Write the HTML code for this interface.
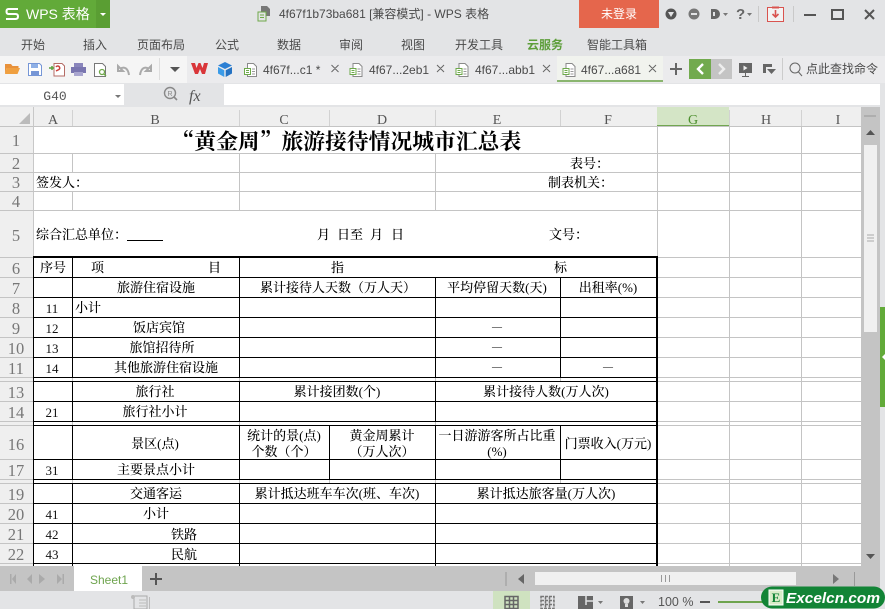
<!DOCTYPE html>
<html><head><meta charset="utf-8"><style>
html,body{margin:0;padding:0;width:885px;height:609px;overflow:hidden;background:#e3e4e6}
svg{display:block}
.t{font:13px "Liberation Serif","Noto Serif CJK SC",serif;fill:#000;font-weight:500}
.c{text-anchor:middle}
.n{font:13px "Liberation Serif",serif;fill:#111;text-anchor:middle}
.d{font:10px "Liberation Serif",serif;fill:#000;text-anchor:middle}
.ti{font:700 21.800px "Noto Serif CJK SC",serif;fill:#000}
.rh{font:16.500px "Liberation Serif",serif;fill:#777;text-anchor:middle}
.ch{font:14px "Liberation Serif",serif;fill:#555;text-anchor:middle}
.u{font:12px "Liberation Sans","Noto Sans CJK SC",sans-serif;fill:#4a4a4a}
.m{text-anchor:middle}
</style></head><body>
<svg width="885" height="609" viewBox="0 0 885 609" xmlns="http://www.w3.org/2000/svg">
<rect width="885" height="609" fill="#e3e4e6"/>

<!-- title bar -->
<rect width="110" height="28" fill="#62aa39"/>
<rect x="96" width="14" height="28" fill="#5a9e33"/>
<path d="M18 9H8.500Q6.500 9 6.500 11.500T8.500 14H15.500Q18 14 18 16.500T15.500 19H6" fill="none" stroke="#fff" stroke-width="2"/>
<text x="26" y="19" font-family="Liberation Sans,Noto Sans CJK SC,sans-serif" font-size="14" fill="#fff">WPS 表格</text>
<path d="M100 13h6l-3 3z" fill="#fff"/>
<path d="M261 6h6l3 3v7h-9z" fill="#777"/><rect x="258" y="12" width="8" height="9" fill="#e3e4e6" stroke="#6fa94a"/><path d="M260 15h4M260 17.500h4" stroke="#6fa94a"/>
<text class="u" x="279" y="18" fill="#555">4f67f1b73ba681 [兼容模式] - WPS 表格</text>
<rect x="579" width="80" height="28" fill="#e5664c"/>
<text x="619" y="18" class="m" font-family="Noto Sans CJK SC,sans-serif" font-size="12" fill="#fff">未登录</text>
<circle cx="671" cy="14" r="5.500" fill="#555"/><path d="M668 12h6l-3 5z" fill="#e3e4e6"/>
<circle cx="694" cy="14" r="5.500" fill="#777"/><rect x="691" y="13" width="6" height="2" fill="#e3e4e6"/>
<path d="M711 9h4a5 5 0 0 1 0 10h-4z" fill="#666"/><path d="M714 12v4" stroke="#e3e4e6" stroke-width="2"/><path d="M723 13h5l-2.500 3z" fill="#777"/>
<text x="736" y="19" font-family="Liberation Sans,sans-serif" font-size="15" font-weight="700" fill="#666">?</text><path d="M747 13h5l-2.500 3z" fill="#777"/>
<path d="M758.500 6v16M793.500 6v16" stroke="#c9c9c9"/>
<rect x="767.500" y="7.500" width="16" height="14" fill="#f3f3f3" stroke="#d9534f"/><path d="M772 7.500h7" stroke="#d9534f" stroke-width="2"/><path d="M775.500 10v6M772.500 14l3 3 3-3" fill="none" stroke="#d9534f" stroke-width="1.600"/>
<rect x="804" y="14" width="12" height="2" fill="#555"/>
<rect x="832" y="10" width="11" height="9" fill="none" stroke="#555" stroke-width="2"/>
<path d="M865 10l9 9M874 10l-9 9" stroke="#555" stroke-width="2"/>

<!-- ribbon -->
<g class="u" font-size="12">
<text class="u" x="21" y="49">开始</text><text class="u" x="83" y="49">插入</text><text class="u" x="137" y="49">页面布局</text><text class="u" x="215" y="49">公式</text><text class="u" x="277" y="49">数据</text><text class="u" x="339" y="49">审阅</text><text class="u" x="401" y="49">视图</text><text class="u" x="455" y="49">开发工具</text>
<text x="527" y="49" font-family="Noto Sans CJK SC,sans-serif" font-size="12" font-weight="700" fill="#5d9e3a">云服务</text>
<text class="u" x="587" y="49">智能工具箱</text></g>

<!-- toolbar -->
<rect y="56" width="187" height="27" fill="#f5f5f5"/>
<rect x="187" y="56" width="698" height="27" fill="#ebebed"/>
<path d="M5 64h6l1.500 2h6v2h-12l-1.500 6z" fill="#e8913a"/><path d="M6.500 68h13.500l-2.500 6h-12.500z" fill="#f0a040"/>
<path d="M28.500 63.500h11l2 2v10h-13z" fill="#fff" stroke="#7696d6"/><rect x="31" y="64" width="7" height="4" fill="#8fb0e6"/><rect x="31" y="71" width="8" height="4" fill="#7696d6"/>
<path d="M54 63.500h8l2.500 2.500v10h-10.500z" fill="#fff" stroke="#b56c66"/><path d="M49 68h5M52 66v4" stroke="#58a03a" stroke-width="1.500"/><path d="M56 71l2-1a2 2 0 1 0-2-3" fill="none" stroke="#c9403a" stroke-width="1.500"/>
<rect x="74" y="63" width="9" height="4" fill="#8a86bc"/><rect x="71" y="67" width="15" height="6" fill="#7a76b0"/><rect x="74" y="72" width="9" height="4" fill="#a9a6cf"/>
<path d="M94.500 63.500h8l3 3v10h-11z" fill="#fff" stroke="#777"/><circle cx="102" cy="72" r="2.500" fill="none" stroke="#6fa94a" stroke-width="1.300"/><path d="M104 74l2 2" stroke="#6fa94a" stroke-width="1.300"/>
<path d="M118 66v5h5zM120 69c4-3 8-1 9 6" fill="none" stroke="#aaa" stroke-width="2"/>
<path d="M151 66v5h-5zM149 69c-4-3-8-1-9 6" fill="none" stroke="#aaa" stroke-width="2"/>
<path d="M159.500 58v22" stroke="#ddd"/>
<path d="M170 67h10l-5 5z" fill="#555"/>
<path d="M191 63l4 11h3l2-5 2 5h3l3-11h-4l-1.500 5-2-5h-2l-2 5-1.500-5z" fill="#d9363a"/>
<path d="M225 62l7 3.500-7 3.500-7-3.500z" fill="#2b7fd4"/><path d="M218 67l6.300 3.300v6.700l-6.300-3.500z" fill="#3a9be8"/><path d="M232 67l-6.300 3.300v6.700l6.300-3.500z" fill="#2472c2"/>
<g id="d1"><path d="M247.500 63.500h6l3 3v10h-9z" fill="#fff" stroke="#8a8a8a"/><rect x="244.500" y="68.500" width="6" height="6" fill="#fff" stroke="#6da94a"/><path d="M246 70.500h3M246 72.500h3" stroke="#6da94a"/><path d="M252 69h3M252 71.500h3M252 74h3" stroke="#999"/></g>
<use href="#d1" x="105.500"/><use href="#d1" x="211.500"/>
<rect x="557" y="56" width="106" height="26" fill="#f1f3ee"/><rect x="557" y="80" width="106" height="2" fill="#8ab56f"/>
<use href="#d1" x="318.500"/>
<text class="u" x="263" y="74" font-size="12.500">4f67f...c1 *</text><text class="u" x="369" y="74">4f67...2eb1</text><text class="u" x="475" y="74">4f67...abb1</text><text class="u" x="581" y="74">4f67...a681</text>
<path d="M331.500 65l7 7M338.500 65l-7 7M437 65l7 7M444 65l-7 7M543 65l7 7M550 65l-7 7M649 65l7 7M656 65l-7 7" stroke="#666"/>
<path d="M676 63v12M670 69h12" stroke="#666" stroke-width="2"/>
<rect x="689" y="59" width="22" height="20" fill="#72aa4e"/><rect x="711" y="59" width="21" height="20" fill="#c4c4c4"/>
<path d="M703 64l-5 5 5 5" fill="none" stroke="#fff" stroke-width="2.400"/><path d="M719 64l5 5-5 5" fill="none" stroke="#eee" stroke-width="2.400"/>
<rect x="739" y="63" width="13" height="10" fill="#666"/><path d="M745.500 73v3M742 76.500h7" fill="none" stroke="#666"/><path d="M743.500 65.500l4 2.500-4 2.500z" fill="#eee"/>
<path d="M763 64h9v3h-6v6h-3z" fill="#666"/><path d="M767 69h9l-4.500 5z" fill="#666"/>
<path d="M782.500 58v22" stroke="#ccc"/>
<circle cx="795" cy="68" r="5" fill="none" stroke="#666"/><path d="M798.500 72l3.500 4" stroke="#666"/>
<text class="u" x="806" y="73">点此查找命令</text>

<!-- formula bar -->
<rect y="84" width="124" height="21" fill="#fff"/>
<text x="55" y="100" class="m" font-family="Liberation Mono,monospace" font-size="13" fill="#555">G40</text>
<path d="M115 95h6l-3 3z" fill="#777"/>
<circle cx="170" cy="93" r="5.500" fill="none" stroke="#888" stroke-width="1.400"/><path d="M174 97l3 3" stroke="#888" stroke-width="1.600"/><text x="170" y="96" class="m" font-family="Liberation Sans,sans-serif" font-size="7" fill="#888">R</text>
<text x="189" y="101" font-family="Liberation Serif,serif" font-style="italic" font-size="16" fill="#555">fx</text>
<rect x="224" y="84" width="656" height="21" fill="#fff"/>

<!-- sheet -->
<rect x="0" y="107" width="861" height="459" fill="#fff"/>
<rect x="0" y="107" width="861" height="19" fill="#efefef"/>
<rect x="0" y="107" width="33" height="459" fill="#efefef"/>
<path d="M30 113v11h-11z" fill="#bbb"/>
<rect x="657" y="107" width="72" height="19" fill="#d4e5c6"/>
<rect x="657" y="125" width="72" height="2" fill="#71a650"/>
<g stroke="#d2d2d2"><path d="M72.500 110v16M239.500 110v16M329.500 110v16M435.500 110v16M560.500 110v16M729.500 110v16M801.500 110v16"/></g>
<path d="M0 126.500H861" stroke="#c4c4c4"/>
<path d="M33.500 107V566" stroke="#c8c8c8"/>
<text class="ch" x="53" y="124">A</text><text class="ch" x="155" y="124">B</text><text class="ch" x="284" y="124">C</text><text class="ch" x="382" y="124">D</text><text class="ch" x="497" y="124">E</text><text class="ch" x="608" y="124">F</text><text class="ch" x="693" y="124" style="fill:#4c8f2e">G</text><text class="ch" x="766" y="124">H</text><text class="ch" x="838" y="124">I</text>
<g><text class="rh" x="16" y="146">1</text><text class="rh" x="16" y="169">2</text><text class="rh" x="16" y="188">3</text><text class="rh" x="16" y="207">4</text><text class="rh" x="16" y="241">5</text><text class="rh" x="16" y="274">6</text><text class="rh" x="16" y="294">7</text><text class="rh" x="16" y="314">8</text><text class="rh" x="16" y="334">9</text><text class="rh" x="16" y="354">10</text><text class="rh" x="16" y="374">11</text><text class="rh" x="16" y="398">13</text><text class="rh" x="16" y="418">14</text><text class="rh" x="16" y="450">16</text><text class="rh" x="16" y="476">17</text><text class="rh" x="16" y="500">19</text><text class="rh" x="16" y="520">20</text><text class="rh" x="16" y="540">21</text><text class="rh" x="16" y="560">22</text></g>

<!-- grid -->
<g stroke="#c4c4c4">
<path d="M0 153.500H861M0 172.500H861M0 191.500H861M0 210.500H861M0 257.500H33M657 257.500H861M657 277.500H861M0 277.500H33M657 297.500H861M0 297.500H33M657 317.500H861M0 317.500H33M657 337.500H861M0 337.500H33M657 357.500H861M0 357.500H33M657 377.500H861M0 377.500H33M657 381.500H861M0 381.500H33M657 401.500H861M0 401.500H33M657 421.500H861M0 421.500H33M657 425.500H861M0 425.500H33M657 459.500H861M0 459.500H33M657 479.500H861M0 479.500H33M657 483.500H861M0 483.500H33M657 503.500H861M0 503.500H33M657 523.500H861M0 523.500H33M657 543.500H861M0 543.500H33M657 563.500H861M0 563.500H33"/>
<path d="M657.500 126V257M729.500 126V566M801.500 126V566M72.500 153V172M72.500 191V210M239.500 153V210M435.500 153V210"/>
<path d="M72.500 377V381M239.500 377V381M435.500 377V381M560.500 377V381M72.500 421V425M239.500 421V425M435.500 421V425M72.500 479V483M239.500 479V483M329.500 479V483M435.500 479V483M560.500 479V483"/>
</g>
<g stroke="#000">
<path d="M33 277.500H657M33 297.500H657M33 317.500H657M33 337.500H657M33 357.500H657M33 377.500H657M33 381.500H657M33 401.500H657M33 421.500H657M33 425.500H657M33 459.500H657M33 479.500H657M33 483.500H657M33 503.500H657M33 523.500H657M33 543.500H657M33 563.500H657"/>
<path d="M72.500 257V377M239.500 257V377M435.500 277V377M560.500 277V377M72.500 381V421M239.500 381V421M435.500 381V421M72.500 425V479M239.500 425V479M329.500 425V479M435.500 425V479M560.500 425V479M72.500 483V566M239.500 483V566M435.500 483V566M33.500 257V566"/>
</g>
<rect x="33" y="256" width="625" height="2" fill="#000"/>
<rect x="656" y="256" width="2" height="310" fill="#000"/>

<!-- cells -->
<text class="ti" x="172.500" y="149">“黄金周”旅游接待情况城市汇总表</text>
<text class="t" x="570" y="168">表号：</text>
<text class="t" x="36" y="187">签发人：</text>
<text class="t" x="548" y="187">制表机关：</text>
<text class="t" x="36" y="239">综合汇总单位：</text>
<path d="M127 240.500h36" stroke="#000"/>
<text class="t" x="317" y="239">月</text><text class="t" x="337" y="239">日至</text><text class="t" x="370" y="239">月</text><text class="t" x="391" y="239">日</text>
<text class="t" x="549" y="239">文号：</text>
<text class="t c" x="53" y="272">序号</text><text class="t" x="91" y="272">项</text><text class="t" x="208" y="272">目</text><text class="t" x="331" y="272">指</text><text class="t" x="554" y="272">标</text>
<text class="t c" x="156" y="292">旅游住宿设施</text><text class="t c" x="338" y="292">累计接待人天数（万人天）</text><text class="t c" x="497" y="292">平均停留天数(天)</text><text class="t c" x="608" y="292">出租率(%)</text>
<text class="n" x="52" y="313">11</text><text class="t" x="75" y="312">小计</text>
<text class="n" x="52" y="333">12</text><text class="t c" x="159" y="332">饭店宾馆</text><text class="d" x="497" y="330">—</text>
<text class="n" x="52" y="353">13</text><text class="t c" x="162" y="352">旅馆招待所</text><text class="d" x="497" y="350">—</text>
<text class="n" x="52" y="373">14</text><text class="t c" x="166" y="372">其他旅游住宿设施</text><text class="d" x="497" y="370">—</text><text class="d" x="608" y="370">—</text>
<text class="t c" x="155" y="396">旅行社</text><text class="t c" x="337" y="396">累计接团数(个)</text><text class="t c" x="546" y="396">累计接待人数(万人次)</text>
<text class="n" x="52" y="417">21</text><text class="t c" x="155" y="416">旅行社小计</text>
<text class="t c" x="155" y="448">景区(点)</text>
<text class="t c" x="284" y="440">统计的景(点)</text><text class="t c" x="284" y="456">个数（个）</text>
<text class="t c" x="382" y="440">黄金周累计</text><text class="t c" x="382" y="456">（万人次）</text>
<text class="t c" x="497" y="440">一日游游客所占比重</text><text class="t c" x="497" y="456">(%)</text>
<text class="t c" x="608" y="448">门票收入(万元)</text>
<text class="n" x="52" y="475">31</text><text class="t c" x="156" y="474">主要景点小计</text>
<text class="t c" x="156" y="498">交通客运</text><text class="t c" x="337" y="498">累计抵达班车车次(班、车次)</text><text class="t c" x="546" y="498">累计抵达旅客量(万人次)</text>
<text class="n" x="52" y="519">41</text><text class="t c" x="156" y="518">小计</text>
<text class="n" x="52" y="539">42</text><text class="t c" x="184" y="539">铁路</text>
<text class="n" x="52" y="559">43</text><text class="t c" x="184" y="559">民航</text>

<!-- v scrollbar -->
<rect x="861" y="107" width="19" height="459" fill="#c4c4c4"/>
<rect x="864" y="145" width="13" height="187" fill="#f0f0f0"/>
<path d="M864 116h12" stroke="#999"/>
<path d="M866 135l4.500-5 4.500 5z" fill="#555"/>
<path d="M866 554h9l-4.500 5z" fill="#555"/>
<path d="M867 235h7M867 238h7M867 241h7" stroke="#aaa"/>
<rect x="880" y="307" width="5" height="100" fill="#62aa39"/>
<path d="M885 354l-3 3 3 3z" fill="#fff"/>

<!-- tab bar -->
<rect y="566" width="880" height="25" fill="#c4c4c4"/>
<rect x="74" y="566" width="68" height="25" fill="#fff"/>
<text x="90" y="584" font-family="Liberation Sans,sans-serif" font-size="12" fill="#6ea44e">Sheet1</text>
<path d="M156 573v12M150 579h12" stroke="#555" stroke-width="2"/>
<g fill="#aaa"><path d="M10 574h1.500v10H10zM16 574v10l-4-5zM32 574v10l-5-5zM39 574l6 5-6 5zM57 574l5 5-5 5zM62.500 574H64v10h-1.500z"/></g>
<path d="M506 572v14M854.500 572v14" stroke="#999"/>
<path d="M524 574v10l-6-5z" fill="#666"/><path d="M833 574v10l6-5z" fill="#777"/>
<rect x="535" y="572" width="261" height="13" fill="#f0f0f0"/>
<path d="M661.500 575v7M665.500 575v7M669.500 575v7" stroke="#999"/>

<!-- status bar -->
<path d="M134 596h13v13h-13z" fill="none" stroke="#aaa"/><circle cx="133" cy="597" r="2" fill="#bbb"/><path d="M139 600h7M139 603h7M139 606h7" stroke="#bbb"/><path d="M149.500 597v12" stroke="#bbb"/>
<rect x="493" y="591" width="37" height="18" fill="#cfe2c0"/>
<g fill="none" stroke="#666" stroke-width="1.500"><path d="M505 596.500h13v12h-13zM505 600.500h13M505 604.500h13M509.500 596.500v12M513.500 596.500v12"/></g>
<g fill="none" stroke="#777" stroke-width="1.500" stroke-dasharray="3 1"><path d="M541 596.500h13v12h-13zM541 600.500h13M541 604.500h13M545.500 596.500v12M549.500 596.500v12"/></g>
<rect x="578" y="596" width="15" height="13" fill="#666"/><path d="M586 596v9M586 601h7" stroke="#dfe0e2" stroke-width="1.500"/><path d="M598 601h5l-2.500 3z" fill="#777"/>
<rect x="620" y="596" width="13" height="13" fill="#666"/><circle cx="626.500" cy="601" r="3" fill="#ddd"/><rect x="625" y="604" width="3" height="3" fill="#ddd"/><path d="M640 601h5l-2.500 3z" fill="#777"/>
<text x="658" y="606" font-family="Liberation Sans,sans-serif" font-size="12.500" fill="#555">100 %</text>
<rect x="700" y="601" width="10" height="2" fill="#555"/>
<rect x="718" y="601" width="45" height="2" fill="#6ea44e"/>

<!-- logo -->
<rect x="761" y="586.500" width="124" height="22" rx="11" fill="#128436"/>
<rect x="769" y="590" width="14" height="15" fill="#d8ecc8" stroke="#fff"/>
<text x="776" y="602" class="m" font-family="Liberation Serif,serif" font-weight="700" font-size="13" fill="#128436">E</text>
<text x="786" y="603" font-family="Liberation Sans,sans-serif" font-weight="700" font-style="italic" font-size="15" fill="#fff" textLength="94" lengthAdjust="spacingAndGlyphs">Excelcn.com</text>
</svg>
</body></html>
